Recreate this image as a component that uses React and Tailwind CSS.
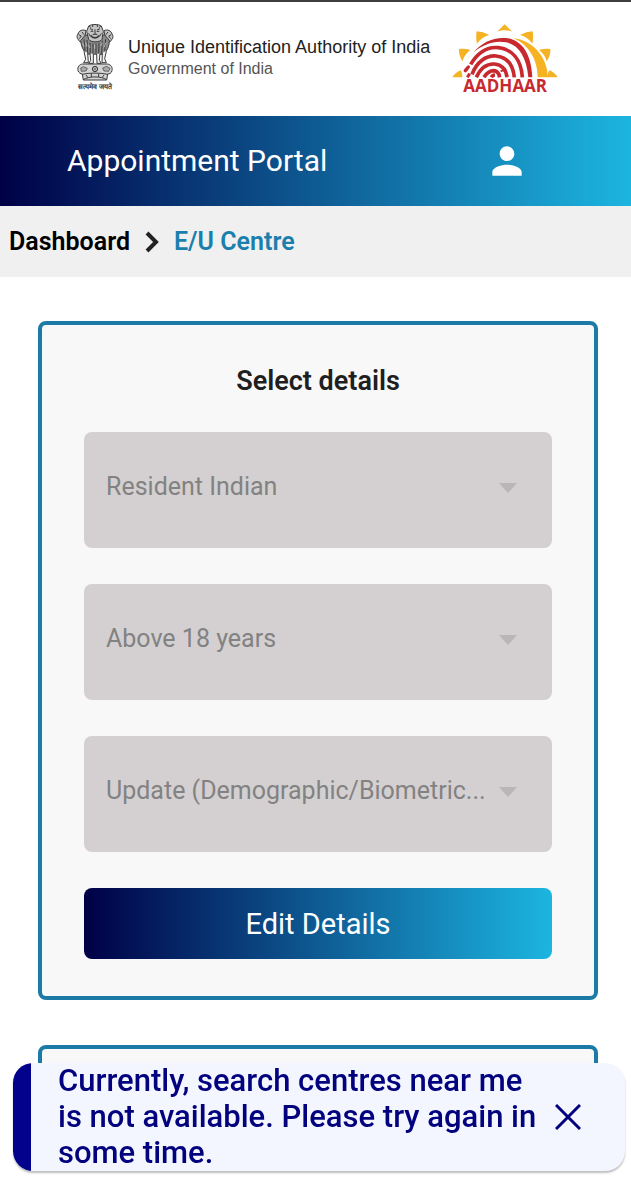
import { useState } from "react";

const details = [
  { id: "residency", label: "Residency", value: "Resident Indian" },
  { id: "age", label: "Age group", value: "Above 18 years" },
  { id: "service", label: "Service", value: "Update (Demographic/Biometric..." },
];

function Emblem() {
  return (
    <svg viewBox="0 0 114 174" className="h-[58px] w-[38px]" fill="none" stroke="#3a3a3a" strokeWidth="3" aria-hidden="true">
      {/* side lions */}
      <path d="M30 20c-10-5-22 0-24 10-5 6-3 14 2 18 2 8 10 6 16 4z" fill="#c4c4c4" />
      <path d="M84 20c10-5 22 0 24 10 5 6 3 14-2 18-2 8-10 6-16 4z" fill="#c4c4c4" />
      <path d="M8 32l8 4-6 8M106 32l-8 4 6 8M18 24l6 8M96 24l-6 8" />
      {/* manes */}
      <path d="M14 50c2 18 8 32 20 40l46 1c14-10 20-24 20-42l-14-16H28z" fill="#8a8a8a" />
      <path d="M24 46l3 36M33 48l2 40M42 56l1 34M51 58v30M60 58v30M69 56l-1 34M79 50l-2 38M89 46l-3 34" />
      <path d="M20 58l5 10M29 55l4 12M38 62l4 10M74 66l5-10M84 70l6-14M56 62v12" stroke="#ddd" strokeWidth="2" />
      {/* front lion */}
      <path d="M38 6c8-6 30-6 38 0l6 16-4 24c-6 10-34 10-40 0l-6-24z" fill="#c4c4c4" />
      <path d="M42 14l9 4M72 14l-9 4M44 22h8M62 22h8M57 16v14M50 31h14M38 28l5 9M76 28l-5 9" />
      <path d="M44 34c6 10 20 10 26 0" strokeWidth="5" />
      <path d="M40 6l4 5M50 3v6M64 3v6M74 6l-4 5" />
      {/* legs */}
      <path d="M24 82l5 24-6 10h14l-2-30M42 88l2 22-6 8h14V90M62 90l1 28h13l-6-9 2-21M79 86l-1 30h13l-5-12 5-22" fill="#f4f4f4" />
      {/* abacus */}
      <path d="M20 120h74c12 2 16 10 14 20-2 8-8 10-13 10l-3 18H22l-3-18c-5 0-11-4-13-10-2-12 4-19 14-20z" fill="#d4d4d4" />
      <circle cx="57" cy="135" r="8" />
      <path d="M57 127v16M49 135h16M51 129l12 12M63 129l-12 12" strokeWidth="1" />
      <path d="M14 132l8-4 12 5-4 8-14 1zM80 132l12-5 10 6-4 9-14-1z" fill="#aaa" strokeWidth="2" />
      <path d="M19 151c20-5 56-5 76 0M22 167c16-11 54-11 70 0M30 153l6 8M46 150v9M68 150v9M84 153l-6 8" />
    </svg>
  );
}

function AadhaarMark() {
  return (
    <svg viewBox="36 40 318 162" className="h-[54px] w-[106px]" aria-hidden="true">
      {/* sun rays */}
      <g fill="#f5b324">
        <path d="M194 41l23 22c-14-6-32-6-46 0z" />
        <path d="M110 62q19 1 38 11c-16 4-28 13-37 26-3-13-3-25-1-37z" />
        <path d="M278 62q-19 1-38 11c16 4 28 13 37 26 3-13 3-25 1-37z" />
        <path d="M57 115q17-3 34 3c-12 9-20 20-23 34-8-11-12-24-11-37z" />
        <path d="M331 115q-17-3-34 3c12 9 20 20 23 34 8-11 12-24 11-37z" />
        <path d="M37 200q8-14 25-21c4 6 5 14 5 21z" />
        <path d="M353 200q-8-14-25-21c-4 6-5 14-5 21z" />
        <path d="M220 82c58 8 102 55 104 118h-31c0-53-26-97-73-118z" />
      </g>
      {/* fingerprint ridges */}
      <path d="M99 126c28-33 66-49 105-43 42 8 70 46 73 117h-12c-6-62-29-97-67-105-33-6-65 4-99 31z" fill="#c8292f" />
      <g fill="none" stroke="#c8292f" strokeWidth="11" strokeLinecap="butt">
        <path d="M92 161c22-36 52-53 83-50 42 5 68 36 72 89" />
        <path d="M96 191c14-38 42-57 72-55 32 3 51 26 55 64" />
        <path d="M109 200c12-27 31-41 54-40 22 2 35 16 38 40" />
        <path d="M132 200c8-13 18-20 30-20 9 1 15 8 17 20" />
        <path d="M154 200c2-4 6-7 11-7" />
        <path d="M182 182l16-8" strokeWidth="6" />
      </g>
      <path d="M76 180l9-11" stroke="#c8292f" strokeWidth="10" strokeLinecap="round" />
      <path d="M82 200l7-11" stroke="#c8292f" strokeWidth="9" />
    </svg>
  );
}

export default function App() {
  const [showToast, setShowToast] = useState(true);

  return (
    <div className="min-h-screen bg-white font-[Roboto,sans-serif] text-[#1f1f1f]">
      <header className="flex h-[116px] border-t-2 border-[#403d40] pl-[76px]">
        <div className="flex w-[38px] flex-col items-center pt-[22px]">
          <Emblem />
          <span className="text-[7px] leading-[10px] font-bold whitespace-nowrap text-[#333]">सत्यमेव जयते</span>
        </div>
        <div className="ml-[14px] pt-[34px] font-['Liberation_Sans',sans-serif]">
          <p className="text-[18px] leading-[22px] text-[#222]">Unique Identification Authority of India</p>
          <p className="text-[16px] leading-[22px] text-[#555]">Government of India</p>
        </div>
        <div className="ml-[22px] flex flex-col items-center pt-[22px]">
          <AadhaarMark />
          <span className="font-['Open_Sans',sans-serif] text-[17px] leading-[16px] font-bold text-[#c8292f]">AADHAAR</span>
        </div>
      </header>

      <div className="flex h-[90px] items-center justify-between bg-linear-to-r/srgb from-[#000046] to-[#1cb5e0] pr-[102px] pl-[67px]">
        <h1 className="text-[30px] leading-[36px] text-white">Appointment Portal</h1>
        <button type="button" aria-label="Profile" className="text-white">
          <svg viewBox="0 0 24 24" className="size-11" fill="currentColor">
            <path d="M12 12c2.210 0 4-1.790 4-4s-1.790-4-4-4-4 1.790-4 4 1.790 4 4 4zm0 2c-2.670 0-8 1.340-8 4v2h16v-2c0-2.660-5.330-4-8-4z" />
          </svg>
        </button>
      </div>

      <nav className="flex h-[71px] items-center bg-[#f0f0f0] px-[9px] text-[25px] leading-[30px] font-semibold">
        <a href="#dashboard" className="text-black">Dashboard</a>
        <svg viewBox="0 0 14 22" className="mx-[15px] h-[22px] w-[14px]" fill="none" stroke="#222" strokeWidth="4" aria-hidden="true">
          <path d="M2 2l9 9-9 9" />
        </svg>
        <a href="#centre" className="text-[#1b7fad]">E/U Centre</a>
      </nav>

      <main className="pt-11 pr-[33px] pl-[38px]">
        <section className="rounded-lg border-4 border-[#1b7ba6] bg-[#f8f8f8] px-[42px] pt-10 pb-[37px]">
          <h2 className="text-center text-[27px] leading-[32px] font-semibold">Select details</h2>
          <form className="mt-[35px] flex flex-col gap-9">
            {details.map((item) => (
              <div key={item.id} className="relative">
                <select
                  id={item.id}
                  aria-label={item.label}
                  disabled
                  defaultValue={item.value}
                  className="block h-[116px] w-full appearance-none rounded-lg bg-[#d4d0d1] pb-[6px] pl-[22px] text-[25px] leading-[30px] text-[#828282] opacity-100"
                >
                  <option>{item.value}</option>
                </select>
                <svg viewBox="0 0 18 10" className="pointer-events-none absolute top-[51px] right-[35px] h-[10px] w-[18px]" fill="#b9b6b7" aria-hidden="true">
                  <path d="M0 0h18l-9 10z" />
                </svg>
              </div>
            ))}
            <button
              type="button"
              className="h-[71px] w-full rounded-lg bg-linear-to-r/srgb from-[#000046] to-[#1cb5e0] text-[29px] leading-[34px] text-white"
            >
              Edit Details
            </button>
          </form>
        </section>

        {/* next section, mostly under the toast */}
        <section className="mt-[45px] h-20 rounded-lg border-4 border-[#1b7ba6] bg-[#f8f8f8]" />
      </main>

      {showToast && (
        <div
          role="alert"
          className="fixed right-[6px] bottom-[29px] left-[13px] flex items-center overflow-hidden rounded-[20px] bg-[#f4f6ff] pr-10 shadow-[0_2px_2px_rgba(0,0,0,0.25)]"
        >
          <div className="w-[18px] self-stretch bg-[#02028c]" />
          <p className="ml-[27px] flex-1 text-[31px] leading-[36px] font-medium text-[#02027e]">
            Currently, search centres near me is not available. Please try again in some time.
          </p>
          <button type="button" aria-label="Close" onClick={() => setShowToast(false)} className="p-1 text-[#02027e]">
            <svg viewBox="0 0 26 26" className="size-[26px]" fill="none" stroke="currentColor" strokeWidth="3">
              <path d="M1 1l24 24M25 1L1 25" />
            </svg>
          </button>
        </div>
      )}
    </div>
  );
}
